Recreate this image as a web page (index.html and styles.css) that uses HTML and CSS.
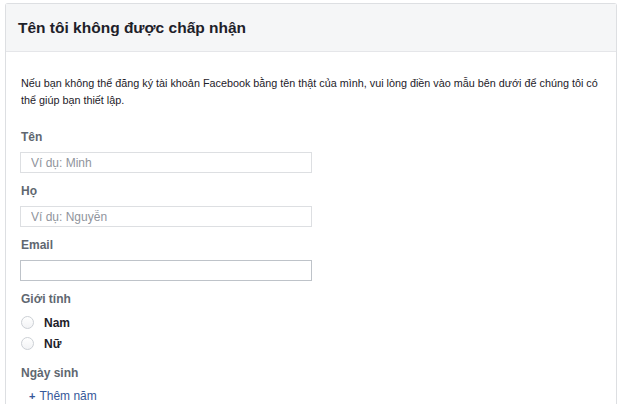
FILE: index.html
```html
<!DOCTYPE html>
<html lang="vi">
<head>
    <meta charset="UTF-8">
    <meta name="viewport" content="width=device-width, initial-scale=1.0">
    <title>Tên tôi không được chấp nhận</title>
    <link rel="stylesheet" href="styles.css">
</head>
<body>
    <div class="card">
        <div class="card-header">
            <h2>Tên tôi không được chấp nhận</h2>
        </div>

        <div class="card-body">
            <p class="intro">Nếu bạn không thể đăng ký tài khoản Facebook bằng tên thật của mình, vui lòng điền vào mẫu bên dưới để chúng tôi có thể giúp bạn thiết lập.</p>

            <div class="field">
                <label for="firstName">Tên</label>
                <input type="text" id="firstName" placeholder="Ví dụ: Minh">
            </div>

            <div class="field">
                <label for="lastName">Họ</label>
                <input type="text" id="lastName" placeholder="Ví dụ: Nguyễn">
            </div>

            <div class="field">
                <label for="email">Email</label>
                <input type="text" id="email" class="focused">
            </div>

            <div class="field gender">
                <label>Giới tính</label>
                <div class="radio-row"><span class="radio"></span>Nam</div>
                <div class="radio-row"><span class="radio"></span>Nữ</div>
            </div>

            <div class="field">
                <label>Ngày sinh</label>
                <a class="add-year" href="#"><span class="plus">+</span>Thêm năm</a>
            </div>
        </div>
    </div>
</body>
</html>
```

FILE: styles.css
```css
body {
    font-family: "Liberation Sans", Arial, sans-serif;
    background-color: #fff;
    color: #1d2129;
    margin: 0;
    padding: 3px 7px 0 5px;
}

.card {
    border: 1px solid #dddfe2;
    border-bottom: none;
    border-radius: 3px 3px 0 0;
    background-color: #fff;
}

.card-header {
    background-color: #f5f6f7;
    border-bottom: 1px solid #e5e6e9;
    height: 46px;
    display: flex;
    align-items: center;
    padding-left: 12px;
    padding-top: 1px;
}

.card-header h2 {
    margin: 0;
    font-size: 15.5px;
    font-weight: bold;
    color: #1d2129;
}

.card-body {
    padding: 23px 15px 0 15px;
}

.intro {
    margin: 0 0 20px 0;
    font-size: 10.8px;
    line-height: 17px;
    color: #1d2129;
}

.field {
    margin-bottom: 10px;
}

.field label {
    display: block;
    font-size: 12px;
    line-height: 16px;
    font-weight: bold;
    color: #606770;
    margin-bottom: 7px;
}

.field input {
    display: block;
    box-sizing: border-box;
    width: 292px;
    height: 21px;
    margin-left: -1px;
    padding: 0 10px;
    border: 1px solid #dddfe2;
    font-family: inherit;
    font-size: 12px;
    color: #1d2129;
    outline: none;
}

.field input::placeholder {
    color: #90949c;
}

.field input.focused {
    border-color: #bec3c9;
}

.gender {
    margin-bottom: 11px;
}

.gender label {
    margin-bottom: 5px;
}

.radio-row {
    display: flex;
    align-items: center;
    height: 21px;
    font-size: 12px;
    font-weight: bold;
    color: #1d2129;
}

.radio {
    width: 11px;
    height: 11px;
    border: 1px solid #ccd0d5;
    border-radius: 50%;
    background: linear-gradient(#fff, #f2f3f5);
    margin: 0 10px 0 0;
}

.add-year {
    display: flex;
    align-items: center;
    height: 16px;
    padding-left: 8px;
    font-size: 12px;
    color: #365899;
    text-decoration: none;
}

.plus {
    font-size: 11px;
    font-weight: bold;
    margin-right: 4px;
}
```
